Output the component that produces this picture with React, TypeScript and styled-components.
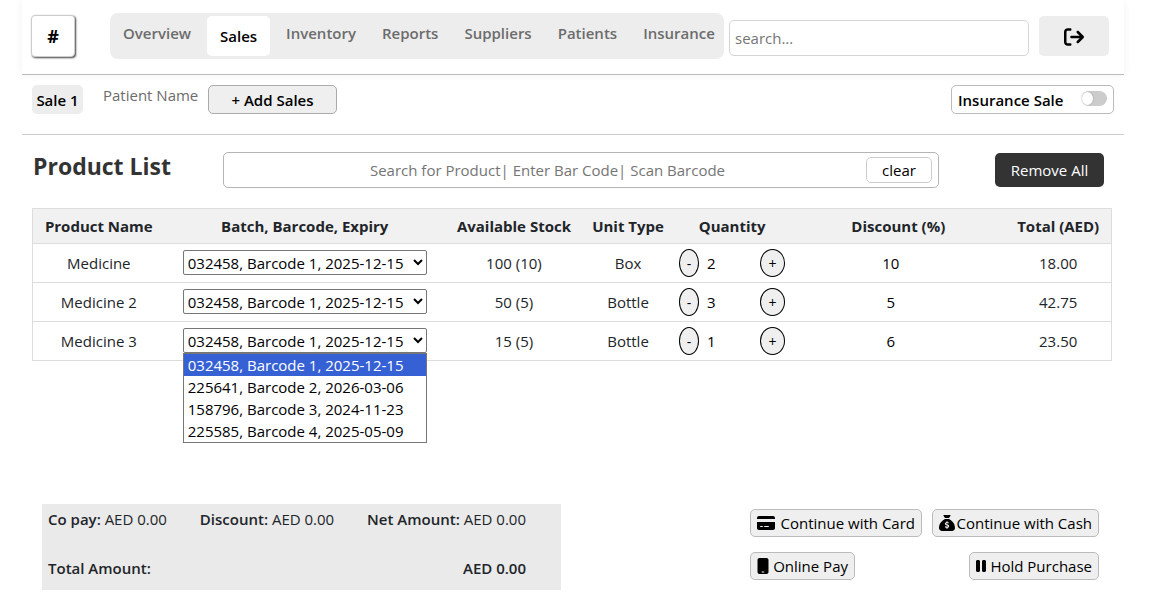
import React, { useState } from 'react';
import styled, { createGlobalStyle, css } from 'styled-components';
import {
  FaArrowRightFromBracket,
  FaCreditCard,
  FaMobile,
  FaPause,
  FaSackDollar,
} from 'react-icons/fa6';

const GlobalStyle = createGlobalStyle`
  *, *::before, *::after {
    box-sizing: border-box;
  }
  body {
    margin: 0;
    background: #fff;
    color: #212529;
    font-family: 'Segoe UI', 'Open Sans', 'Noto Sans', sans-serif;
    font-size: 15px;
    line-height: 24px;
  }
  button, input, select {
    margin: 0;
    font: inherit;
    color: #000;
  }
`;

const Page = styled.div`
  margin: 0 44px 0 22px;
`;

const Header = styled.header`
  display: flex;
  align-items: flex-start;
  height: 75px;
  padding: 13px 15px 0 9px;
  border-bottom: 1px solid #bbb;
  box-shadow: 0 0 8px rgba(0, 0, 0, 0.06);
`;

const LogoButton = styled.button`
  width: 44px;
  height: 42px;
  margin: 2px 35px 0 0;
  padding: 0;
  border: 1px solid #ccc;
  border-radius: 4px;
  background: #fff;
  box-shadow: 1px 1px 2px #444;
  font-size: 18px;
  font-weight: 700;
`;

const Nav = styled.nav`
  display: flex;
  flex: 0 0 614px;
  min-width: 0;
  align-items: flex-start;
  height: 46px;
  border-radius: 8px;
  background: #ededed;
`;

const NavLink = styled.a<{ $active?: boolean }>`
  padding: 8px 13px;
  color: #6c6c6c;
  font-weight: 600;
  text-decoration: none;
  ${({ $active }) =>
    $active &&
    css`
      height: 40px;
      margin: 3px;
      border-radius: 5px;
      background: #fff;
      color: #000;
    `}
`;

const SiteSearch = styled.input`
  flex: 1;
  min-width: 0;
  height: 36px;
  margin: 7px 10px 0 5px;
  padding: 0 5px;
  border: 1px solid #d5d5d5;
  border-radius: 5px;
  background: #fff;
  &::placeholder {
    color: #757575;
    opacity: 1;
  }
`;

const LogoutButton = styled.button`
  display: flex;
  align-items: center;
  justify-content: center;
  width: 70px;
  height: 40px;
  margin-top: 3px;
  padding-top: 3px;
  border: 0;
  border-radius: 5px;
  background: #ededed;
  font-size: 20px;
`;

const SaleBar = styled.div`
  display: flex;
  align-items: flex-start;
  height: 60px;
  padding: 10px 10px 0;
  border-bottom: 1px solid #ccc;
`;

const SaleTab = styled.button`
  width: 51px;
  height: 29px;
  padding: 0;
  border: 0;
  border-radius: 5px;
  background: #ededed;
  font-weight: 600;
`;

const PatientName = styled.span`
  width: 105px;
  margin-left: 20px;
  line-height: 20px;
  color: #6c6c6c;
`;

const AddSale = styled.button`
  width: 129px;
  height: 29px;
  padding: 0;
  border: 1px solid #aaa;
  border-radius: 5px;
  background: #efefef;
  font-weight: 600;
`;

const InsuranceToggle = styled.label`
  display: flex;
  justify-content: space-between;
  width: 163px;
  height: 29px;
  margin-left: auto;
  padding: 2px 6px;
  border: 1px solid #bbb;
  border-radius: 5px;
  color: #000;
  font-weight: 600;
`;

const Switch = styled.input`
  appearance: none;
  width: 25px;
  height: 15px;
  margin: 3px 0 0;
  padding: 1px 0;
  border-radius: 8px;
  background: #ccc;
  &::before {
    content: '';
    display: block;
    width: 11px;
    height: 13px;
    border-radius: 50%;
    background: #fff;
    box-shadow: 0 0 2px #999;
  }
  &:checked::before {
    margin-left: 14px;
  }
`;

const ListBar = styled.div`
  display: flex;
  align-items: center;
  padding: 17px 20px 0 11px;
`;

const Title = styled.h1`
  width: 190px;
  margin: 0 0 8px;
  color: #333;
  font-size: 23px;
  font-weight: 700;
  line-height: 28px;
`;

const ProductSearch = styled.div`
  display: flex;
  flex: 1;
  align-items: center;
  height: 36px;
  margin-right: 56px;
  padding: 0 6px 0 5px;
  border: 1px solid #b5b5b5;
  border-radius: 5px;
`;

const ProductInput = styled.input`
  flex: 1;
  min-width: 0;
  padding: 0;
  border: 0;
  outline: 0;
  text-align: center;
  background: transparent;
  &::placeholder {
    color: #757575;
    opacity: 1;
  }
`;

const ClearButton = styled.button`
  width: 66px;
  height: 26px;
  padding: 0;
  border: 1px solid #ccc;
  border-radius: 5px;
  background: #fff;
`;

const RemoveButton = styled.button`
  width: 109px;
  height: 34px;
  padding: 0;
  border: 0;
  border-radius: 5px;
  background: #333;
  color: #fff;
`;

const TableArea = styled.div`
  min-height: 316px;
  padding: 20px 12px 0 10px;
`;

const Table = styled.table`
  width: 100%;
  table-layout: fixed;
  border-collapse: collapse;
  border: 1px solid #ddd;
  text-align: center;
`;

const HeadCell = styled.th`
  height: 35px;
  padding: 0;
  background: #f1f1f1;
  font-weight: 700;
  white-space: nowrap;
`;

const Cell = styled.td`
  height: 39px;
  padding: 0;
  border-top: 1px solid #ddd;
`;

const BatchField = styled.div`
  position: relative;
  width: 244px;
  height: 26px;
  margin: 0 auto;
`;

const BatchSelect = styled.select`
  display: block;
  width: 100%;
  height: 25px;
  padding: 0;
  border: 1px solid #767676;
  border-radius: 2px;
  background-color: #fff;
`;

const Options = styled.ul`
  position: absolute;
  top: 25px;
  left: 0;
  right: 0;
  margin: 0;
  padding: 0;
  border: 1px solid #767676;
  background: #fff;
  color: #000;
  list-style: none;
  text-align: left;
`;

const Option = styled.li<{ $selected: boolean }>`
  height: 22px;
  padding-left: 4px;
  line-height: 22px;
  white-space: nowrap;
  background: ${({ $selected }) => ($selected ? '#3661d4' : '#fff')};
  color: ${({ $selected }) => ($selected ? '#fff' : '#000')};
`;

const Quantity = styled.div`
  display: flex;
  align-items: center;
  justify-content: center;
`;

const StepButton = styled.button<{ $wide?: boolean }>`
  width: ${({ $wide }) => ($wide ? 25 : 20)}px;
  height: 28px;
  padding: 1px 0 0;
  border: 1px solid #000;
  border-radius: 50%;
  background: #efefef;
  font-size: 14px;
  line-height: 24px;
`;

const QuantityInput = styled.input`
  width: 61px;
  padding: 0 8px;
  border: 0;
  background: transparent;
`;

const DiscountInput = styled.input`
  width: 100px;
  padding: 0;
  border: 0;
  background: transparent;
  text-align: center;
`;

const Footer = styled.footer`
  display: flex;
  align-items: flex-start;
  justify-content: space-between;
  padding: 0 25px 22px 20px;
`;

const Summary = styled.section`
  width: 519px;
  height: 86px;
  padding: 3px 35px 0 6px;
  background: #eaeaea;
`;

const SummaryRow = styled.div`
  display: flex;
  justify-content: space-between;
  margin-bottom: 25px;
  b {
    font-weight: 600;
  }
`;

const Actions = styled.div`
  display: flex;
  flex-direction: column;
  gap: 15px;
  padding-top: 5px;
`;

const ActionRow = styled.div`
  display: flex;
  justify-content: space-between;
  gap: 10px;
`;

const ActionButton = styled.button<{ $width: number }>`
  display: flex;
  align-items: center;
  justify-content: space-between;
  width: ${({ $width }) => $width}px;
  height: 28px;
  padding: 0 6px;
  border: 1px solid #bbb;
  border-radius: 5px;
  background: #efefef;
  white-space: nowrap;
`;

const PhoneIcon = styled(FaMobile)`
  width: 12px;
  height: 16px;
`;

const PauseIcon = styled(FaPause)`
  width: 10px;
  height: 16px;
`;

const links = ['Overview', 'Sales', 'Inventory', 'Reports', 'Suppliers', 'Patients', 'Insurance'];

const batches = [
  '032458, Barcode 1, 2025-12-15',
  '225641, Barcode 2, 2026-03-06',
  '158796, Barcode 3, 2024-11-23',
  '225585, Barcode 4, 2025-05-09',
];

const columns = [
  { label: 'Product Name', width: 132 },
  { label: 'Batch, Barcode, Expiry', width: 280 },
  { label: 'Available Stock', width: 138 },
  { label: 'Unit Type', width: 90 },
  { label: 'Quantity', width: 118 },
  { label: 'Discount (%)', width: 214 },
  { label: 'Total (AED)', width: 106 },
];

const Column = styled.col<{ $width: number }>`
  width: ${({ $width }) => $width}px;
`;

const initialProducts = [
  { name: 'Medicine', stock: '100 (10)', unit: 'Box', quantity: 2, discount: '10', total: '18.00' },
  { name: 'Medicine 2', stock: '50 (5)', unit: 'Bottle', quantity: 3, discount: '5', total: '42.75' },
  { name: 'Medicine 3', stock: '15 (5)', unit: 'Bottle', quantity: 1, discount: '6', total: '23.50' },
];

export default function App() {
  const [products, setProducts] = useState(initialProducts);
  const [chosen, setChosen] = useState([0, 0, 0]);
  const [openRow, setOpenRow] = useState<number | null>(2);
  const [query, setQuery] = useState('');

  const setQuantity = (row: number, quantity: number) =>
    setProducts(products.map((p, i) => (i === row ? { ...p, quantity: Math.max(0, quantity) } : p)));

  const choose = (row: number, batch: number) => {
    setChosen(chosen.map((c, i) => (i === row ? batch : c)));
    setOpenRow(null);
  };

  return (
    <>
      <GlobalStyle />
      <Page>
        <Header>
          <LogoButton>#</LogoButton>
          <Nav>
            {links.map((link) => (
              <NavLink key={link} href={`#${link.toLowerCase()}`} $active={link === 'Sales'}>
                {link}
              </NavLink>
            ))}
          </Nav>
          <SiteSearch type="text" placeholder="search..." aria-label="Search" />
          <LogoutButton aria-label="Log out">
            <FaArrowRightFromBracket />
          </LogoutButton>
        </Header>

        <SaleBar>
          <SaleTab>Sale 1</SaleTab>
          <PatientName>Patient Name</PatientName>
          <AddSale>+ Add Sales</AddSale>
          <InsuranceToggle>
            Insurance Sale
            <Switch type="checkbox" role="switch" />
          </InsuranceToggle>
        </SaleBar>

        <main>
          <ListBar>
            <Title>Product List</Title>
            <ProductSearch>
              <ProductInput
                type="text"
                value={query}
                onChange={(e) => setQuery(e.target.value)}
                placeholder="Search for Product| Enter Bar Code| Scan Barcode"
                aria-label="Search products"
              />
              <ClearButton onClick={() => setQuery('')}>clear</ClearButton>
            </ProductSearch>
            <RemoveButton onClick={() => setProducts([])}>Remove All</RemoveButton>
          </ListBar>

          <TableArea>
            <Table>
              <colgroup>
                {columns.map((c) => (
                  <Column key={c.label} $width={c.width} />
                ))}
              </colgroup>
              <thead>
                <tr>
                  {columns.map((c) => (
                    <HeadCell key={c.label} scope="col">
                      {c.label}
                    </HeadCell>
                  ))}
                </tr>
              </thead>
              <tbody>
                {products.map((p, row) => (
                  <tr key={p.name}>
                    <Cell>{p.name}</Cell>
                    <Cell>
                      <BatchField>
                        <BatchSelect
                          aria-label={`Batch of ${p.name}`}
                          value={chosen[row]}
                          onChange={(e) => choose(row, Number(e.target.value))}
                        >
                          {batches.map((b, i) => (
                            <option key={b} value={i}>
                              {b}
                            </option>
                          ))}
                        </BatchSelect>
                        {openRow === row && (
                          <Options role="listbox" aria-label="Batches">
                            {batches.map((b, i) => (
                              <Option
                                key={b}
                                role="option"
                                aria-selected={i === chosen[row]}
                                $selected={i === chosen[row]}
                                onClick={() => choose(row, i)}
                              >
                                {b}
                              </Option>
                            ))}
                          </Options>
                        )}
                      </BatchField>
                    </Cell>
                    <Cell>{p.stock}</Cell>
                    <Cell>{p.unit}</Cell>
                    <Cell>
                      <Quantity>
                        <StepButton aria-label="Decrease" onClick={() => setQuantity(row, p.quantity - 1)}>
                          -
                        </StepButton>
                        <QuantityInput
                          type="text"
                          inputMode="numeric"
                          aria-label={`Quantity of ${p.name}`}
                          value={p.quantity}
                          onChange={(e) => setQuantity(row, Number(e.target.value) || 0)}
                        />
                        <StepButton $wide aria-label="Increase" onClick={() => setQuantity(row, p.quantity + 1)}>
                          +
                        </StepButton>
                      </Quantity>
                    </Cell>
                    <Cell>
                      <DiscountInput type="number" aria-label={`Discount on ${p.name}`} defaultValue={p.discount} />
                    </Cell>
                    <Cell>{p.total}</Cell>
                  </tr>
                ))}
              </tbody>
            </Table>
          </TableArea>
        </main>

        <Footer>
          <Summary>
            <SummaryRow>
              <span><b>Co pay:</b> AED 0.00</span>
              <span><b>Discount:</b> AED 0.00</span>
              <span><b>Net Amount:</b> AED 0.00</span>
            </SummaryRow>
            <SummaryRow>
              <b>Total Amount:</b>
              <b>AED 0.00</b>
            </SummaryRow>
          </Summary>
          <Actions>
            <ActionRow>
              <ActionButton $width={172}>
                <FaCreditCard size={18} />
                Continue with Card
              </ActionButton>
              <ActionButton $width={167}>
                <FaSackDollar size={16} />
                Continue with Cash
              </ActionButton>
            </ActionRow>
            <ActionRow>
              <ActionButton $width={105}>
                <PhoneIcon />
                Online Pay
              </ActionButton>
              <ActionButton $width={130}>
                <PauseIcon />
                Hold Purchase
              </ActionButton>
            </ActionRow>
          </Actions>
        </Footer>
      </Page>
    </>
  );
}
